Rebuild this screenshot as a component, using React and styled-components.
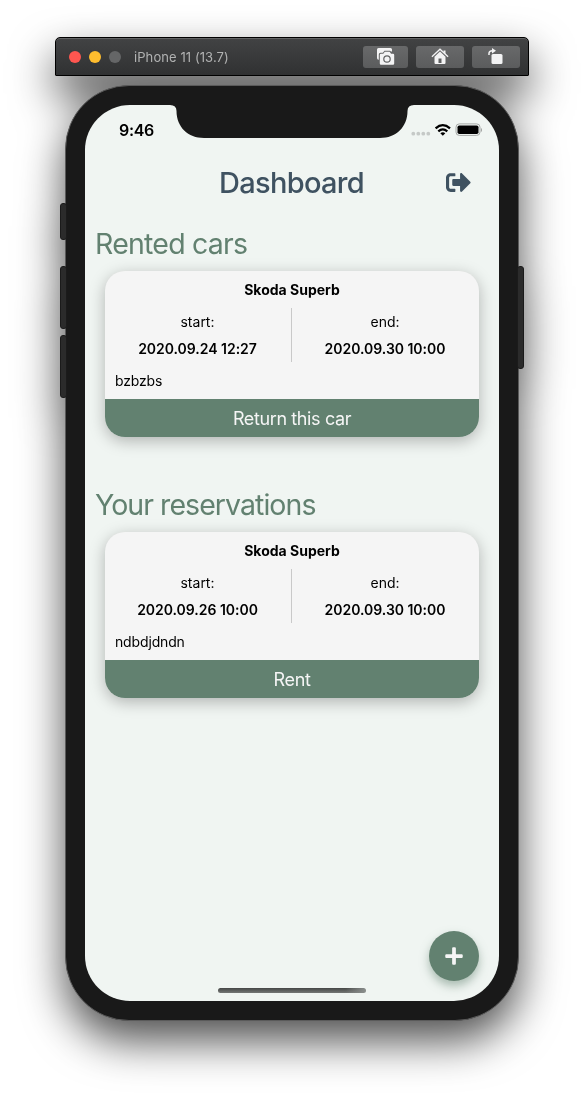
import React from "react";
import styled, { createGlobalStyle } from "styled-components";
import { FaSignOutAlt, FaPlus } from "react-icons/fa";

const GlobalStyle = createGlobalStyle`
  * { box-sizing: border-box; }
  body { margin: 0; background: #fff; overflow: hidden; font-family: Inter, "Liberation Sans", sans-serif; }
`;

const Stage = styled.main`
  display: flex;
  flex-direction: column;
  align-items: center;
  width: 584px;
  height: 1095px;
  padding-top: 37px;
  filter: drop-shadow(0 20px 22px rgba(0, 0, 0, 0.69));
`;

const TitleBar = styled.header`
  display: flex;
  align-items: center;
  gap: 8px;
  width: 474px;
  height: 39px;
  padding: 0 8px 0 13px;
  border: 1px solid #000;
  border-radius: 5px 5px 1px 1px;
  background: linear-gradient(#424344, #303132);
  box-shadow: inset 0 1px 0 #626364;
`;

const Light = styled.span`
  width: 12px;
  height: 12px;
  border-radius: 50%;
  background: ${(p) => p.$color};
`;

const WindowTitle = styled.h1`
  flex: 1;
  margin: 0 0 0 5px;
  color: #b1b2b2;
  font-size: 13px;
  font-weight: 400;
  letter-spacing: 0.08px;
`;

const ToolButton = styled.button`
  display: flex;
  align-items: center;
  justify-content: center;
  width: ${(p) => p.$width || 48}px;
  height: 22px;
  padding: 0;
  border: 0;
  border-radius: 3px;
  background: linear-gradient(#68696a, #5b5c5d);
`;

const Phone = styled.div`
  position: relative;
  width: 454px;
  height: 936px;
  margin-top: 9px;
  padding: 19px;
  border: 1px solid #5a5a5a;
  border-radius: 64px;
  background: #191919;
`;

const SideKey = styled.i`
  position: absolute;
  top: ${(p) => p.$top}px;
  ${(p) => (p.$right ? "right" : "left")}: -6px;
  width: 7px;
  height: ${(p) => p.$height}px;
  border: 1px solid #1b1b1b;
  border-radius: 3px;
  background: #2b2b2b;
`;

const Screen = styled.div`
  position: relative;
  display: flex;
  flex-direction: column;
  width: 414px;
  height: 896px;
  overflow: hidden;
  border-radius: 45px;
  background: #f0f5f2;
`;

const StatusBar = styled.div`
  display: flex;
  justify-content: space-between;
  height: 44px;
  padding: 16px 17px 0 34px;
`;

const Clock = styled.time`
  font-size: 16px;
  font-weight: 600;
  line-height: 18px;
  letter-spacing: -0.3px;
`;

const Notch = styled.svg`
  position: absolute;
  top: -1px;
  left: 85px;
`;

const NavBar = styled.div`
  display: grid;
  grid-template-columns: 1fr auto 1fr;
  align-items: center;
  height: 67px;
  padding: 0 28px 0 27px;
  color: #3f5261;
`;

const PageTitle = styled.h2`
  grid-column: 2;
  margin: 0;
  font-size: 29px;
  font-weight: 500;
  letter-spacing: -0.67px;
`;

const LogoutButton = styled.button`
  justify-self: end;
  display: flex;
  padding: 0 0 1px;
  border: 0;
  background: none;
  color: inherit;
`;

const Section = styled.section`
  padding: 10px 20px 0;
  margin-bottom: 40px;
`;

const SectionTitle = styled.h3`
  margin: 0 0 9px -10px;
  color: #628170;
  font-size: 28.5px;
  font-weight: 400;
  line-height: 36px;
  letter-spacing: ${(p) => p.$tracking}px;
`;

const Card = styled.article`
  height: 166px;
  overflow: hidden;
  border-radius: 20px;
  background: #f5f5f5;
  box-shadow: 0 4px 16px rgba(0, 0, 0, 0.27);
  font-size: 14px;
  line-height: 17px;
`;

const CarName = styled.h4`
  margin: 0;
  padding: 10px 0;
  text-align: center;
  font-size: 14px;
  font-weight: 700;
`;

const Dates = styled.div`
  display: grid;
  grid-template-columns: 1fr 1fr;
  height: 54px;
`;

const DateCell = styled.div`
  display: flex;
  flex-direction: column;
  align-items: center;
  gap: 10px;
  padding: 5px 1px 0 0;
  &:first-child { border-right: 1px solid #c9c9c9; }
`;

const Moment = styled.strong`
  font-weight: 600;
  letter-spacing: -0.03px;
`;

const Note = styled.p`
  margin: 0;
  padding: 10px;
  letter-spacing: -0.15px;
`;

const CardAction = styled.button`
  display: block;
  width: 100%;
  height: 38px;
  padding: 1px 0 0;
  border: 0;
  background: #628170;
  color: #f5f5f5;
  font: 400 18px Inter, sans-serif;
  letter-spacing: -0.38px;
`;

const AddButton = styled.button`
  position: absolute;
  right: 20px;
  bottom: 20px;
  display: flex;
  align-items: center;
  justify-content: center;
  width: 50px;
  height: 50px;
  padding: 0;
  border: 0;
  border-radius: 50%;
  background: #628170;
  color: #f5f5f5;
  box-shadow: 0 5px 10px rgba(98, 129, 112, 0.5);
`;

const HomeIndicator = styled.div`
  position: absolute;
  left: 133px;
  bottom: 8px;
  width: 148px;
  height: 5px;
  border-radius: 3px;
  background: linear-gradient(90deg, transparent 86%, #8b8f8d), linear-gradient(#454746, #747775);
`;

const CameraIcon = () => (
  <svg width="20" height="18" viewBox="0.5 0.5 20 18">
    <path fill="#f3f3f4" d="M3 0.500h12q1.500 0 1.500 1.500V4.100h-1L14.500 3.300H9L7.400 5.200H5Q3.300 5.200 3.300 7v5.200H3Q1.500 12 1.500 10.500v-8.500Q1.500.5 3 .5Z" />
    <path fill="#f3f3f4" fillRule="evenodd" d="M5.500 6.200h2.300l1.500-1.900h4.800l1.500 1.900h1.900q1.200 0 1.200 1.200V16q0 1.200-1.200 1.200H5.500q-1.200 0-1.200-1.200V7.400q0-1.200 1.200-1.200ZM11.500 7.700a3.800 3.800 0 1 0 0 7.600a3.800 3.800 0 0 0 0-7.600Zm0 1.200a2.600 2.600 0 1 1 0 5.200a2.600 2.600 0 0 1 0-5.200Z" />
  </svg>
);

const HomeIcon = () => (
  <svg width="18" height="17" viewBox="0 0 18 17">
    <path fill="none" stroke="#f3f3f4" strokeWidth="1.300" d="M.9 8.800 9 1.200l8.100 7.600" />
    <path fill="#f3f3f4" fillRule="evenodd" d="m9 3.500 5.500 5.200V15q0 1-1 1h-9q-1 0-1-1V8.700ZM7.500 10.500V15h3v-4.500ZM12.500 2.500h2V6l-2-1.800Z" />
  </svg>
);

const RotateIcon = () => (
  <svg width="17" height="18" viewBox="1.5 1 17 18">
    <rect x="5" y="7" width="11" height="10" rx="1.500" fill="#f3f3f4" />
    <path fill="none" stroke="#f3f3f4" strokeWidth="1.500" d="M2.500 8V6.500Q2.500 3.700 6 3.700" />
    <path fill="#f3f3f4" d="M5.500 1 9.500 3.700l-4 2.800Z" />
  </svg>
);

const StatusIcons = () => (
  <svg width="72" height="18" viewBox="0 0 72 18">
    <g fill="#c5c9c7">
      <circle cx="3.300" cy="12.700" r="1.900" /><circle cx="8.300" cy="12.700" r="1.900" />
      <circle cx="13.300" cy="12.700" r="1.900" /><circle cx="18.300" cy="12.700" r="1.900" />
    </g>
    <g fill="none" stroke="#000" strokeWidth="2.300">
      <path d="M25.600 7.300Q32.800 1 40 7.300" />
      <path d="M28.300 10.300Q32.800 6.500 37.300 10.300" />
    </g>
    <path d="m30.300 12.200q2.500-1.900 5 0l-2.500 2.600Z" />
    <rect x="46" y="2.900" width="24" height="11.500" rx="3.300" fill="none" stroke="#a5a8a6" />
    <rect x="47.500" y="4.500" width="21" height="8.500" rx="1.800" />
    <path fill="#a5a8a6" d="M71 7v4q1.300-.7 1.300-2T71 7Z" />
  </svg>
);

const RentalCard = ({ car, start, end, note, action }) => (
  <Card>
    <CarName>{car}</CarName>
    <Dates>
      <DateCell><span>start:</span><Moment>{start}</Moment></DateCell>
      <DateCell><span>end:</span><Moment>{end}</Moment></DateCell>
    </Dates>
    <Note>{note}</Note>
    <CardAction>{action}</CardAction>
  </Card>
);

export default function App() {
  return (
    <>
      <GlobalStyle />
      <Stage>
        <TitleBar>
          <Light $color="#ff5650" />
          <Light $color="#ffbd2e" />
          <Light $color="#656667" />
          <WindowTitle>iPhone 11 (13.7)</WindowTitle>
          <ToolButton $width={45}><CameraIcon /></ToolButton>
          <ToolButton><HomeIcon /></ToolButton>
          <ToolButton><RotateIcon /></ToolButton>
        </TitleBar>
        <Phone>
          <SideKey $top={117} $height={37} />
          <SideKey $top={180} $height={63} />
          <SideKey $top={249} $height={63} />
          <SideKey $top={180} $height={103} $right />
          <Screen>
            <StatusBar>
              <Clock>9:46</Clock>
              <StatusIcons />
            </StatusBar>
            <Notch width="244" height="34" viewBox="0 0 244 34">
              <path fill="#191919" d="M0 0H244V1Q237.500 1 237.500 7C237.500 23 226 34 210 34H34C18 34 6.500 23 6.500 7Q6.500 1 0 1Z" />
            </Notch>
            <NavBar>
              <PageTitle>Dashboard</PageTitle>
              <LogoutButton><FaSignOutAlt size={25} /></LogoutButton>
            </NavBar>
            <Section>
              <SectionTitle $tracking={-0.78}>Rented cars</SectionTitle>
              <RentalCard car="Skoda Superb" start="2020.09.24 12:27" end="2020.09.30 10:00" note="bzbzbs" action="Return this car" />
            </Section>
            <Section>
              <SectionTitle $tracking={-0.95}>Your reservations</SectionTitle>
              <RentalCard car="Skoda Superb" start="2020.09.26 10:00" end="2020.09.30 10:00" note="ndbdjdndn" action="Rent" />
            </Section>
            <AddButton><FaPlus size={20} /></AddButton>
            <HomeIndicator />
          </Screen>
        </Phone>
      </Stage>
    </>
  );
}
